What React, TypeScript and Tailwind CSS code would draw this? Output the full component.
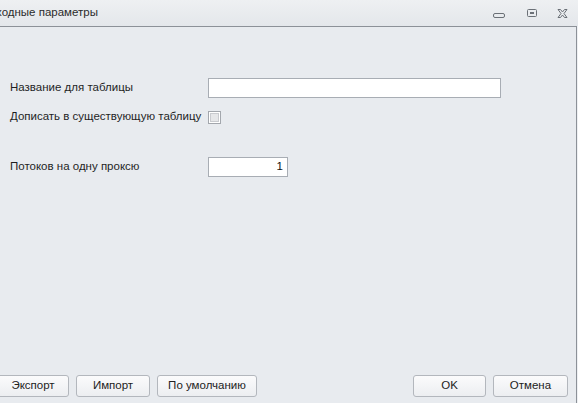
import React from 'react';

const font = { fontFamily: '"Liberation Sans", Arial, sans-serif' };

function WinButton({ kind }: { kind: 'min' | 'max' | 'close' }): React.ReactElement {
  if (kind === 'min') {
    return (
      <svg width="12" height="6" viewBox="0 0 12 6" className="mt-[6px]">
        <rect x="0.5" y="0.5" width="11" height="4" rx="1.5" fill="none" stroke="#6b7077" strokeWidth="1" />
      </svg>
    );
  }
  if (kind === 'max') {
    return (
      <svg width="10" height="8" viewBox="0 0 10 8">
        <rect x="0.5" y="0.5" width="9" height="7" rx="1" fill="none" stroke="#6b7077" strokeWidth="1" />
        <rect x="3" y="3" width="4" height="2" fill="#6b7077" />
      </svg>
    );
  }
  return (
    <svg width="11" height="9" viewBox="0 0 11 9">
      <path d="M1 0.5 H3.5 L5.5 3 L7.5 0.5 H10 L7 4.5 L10 8.5 H7.5 L5.5 6 L3.5 8.5 H1 L4 4.5 Z" fill="none" stroke="#6b7077" strokeWidth="1" strokeLinejoin="round" />
    </svg>
  );
}

function Btn({ label, width }: { label: string; width: string }): React.ReactElement {
  return (
    <button
      className={`h-[22px] ${width} rounded-[3px] border border-[#b3b7bd] bg-gradient-to-b from-[#fbfbfc] to-[#eceef1] text-[11.5px] text-[#222] flex items-center justify-center`}
      style={font}
    >
      {label}
    </button>
  );
}

export default function App(): React.ReactElement {
  return (
    <div className="w-[578px] h-[403px] overflow-hidden flex flex-col bg-[#e8ebef]" style={font}>
      {/* caption */}
      <div className="h-[26px] shrink-0 flex items-center bg-gradient-to-b from-[#eef0f2] to-[#e4e7eb] overflow-hidden">
        <span className="ml-[-18px] text-[11.5px] text-[#2b2b2b] whitespace-nowrap">Исходные параметры</span>
        <div className="ml-auto flex items-center h-full">
          <div className="w-[12px] mr-[22px] flex items-start"><WinButton kind="min" /></div>
          <div className="mr-[20px] flex"><WinButton kind="max" /></div>
          <div className="mr-[10px] flex"><WinButton kind="close" /></div>
        </div>
      </div>

      <div className="flex-1 flex">
        <div className="w-[577px] border-t border-r border-[#8c9198] flex flex-col">
          {/* form */}
          <div className="pt-[51px] pl-[10px] flex flex-col text-[11.5px] text-[#1f1f1f]">
            <div className="flex items-center h-[20px]">
              <span className="w-[198px] whitespace-nowrap">Название для таблицы</span>
              <input className="w-[293px] h-[20px] bg-white border border-[#a8adb4] outline-none" />
            </div>
            <div className="flex items-center h-[20px] mt-[9px]">
              <span className="w-[198px] whitespace-nowrap">Дописать в существующую таблицу</span>
              <span className="w-[13px] h-[13px] border border-[#a3a7ad] bg-white p-[1px] flex">
                <span className="flex-1 bg-[#e6e7e9] border border-[#c9cbcf]" />
              </span>
            </div>
            <div className="flex items-center h-[20px] mt-[30px]">
              <span className="w-[198px] whitespace-nowrap">Потоков на одну проксю</span>
              <div className="w-[80px] h-[20px] bg-white border border-[#a8adb4] flex items-center justify-end pr-[4px] text-[#111]">
                1
              </div>
            </div>
          </div>

          {/* bottom buttons */}
          <div className="mt-auto mb-[6px] flex items-center">
            <div className="ml-[-3px] flex gap-[7px]">
              <Btn label="Экспорт" width="w-[72px]" />
              <Btn label="Импорт" width="w-[74px]" />
              <Btn label="По умолчанию" width="w-[100px]" />
            </div>
            <div className="ml-auto mr-[8px] flex gap-[7px]">
              <Btn label="OK" width="w-[73px]" />
              <Btn label="Отмена" width="w-[75px]" />
            </div>
          </div>
        </div>
        <div className="flex-1 bg-[#eef0f3]" />
      </div>
    </div>
  );
}
